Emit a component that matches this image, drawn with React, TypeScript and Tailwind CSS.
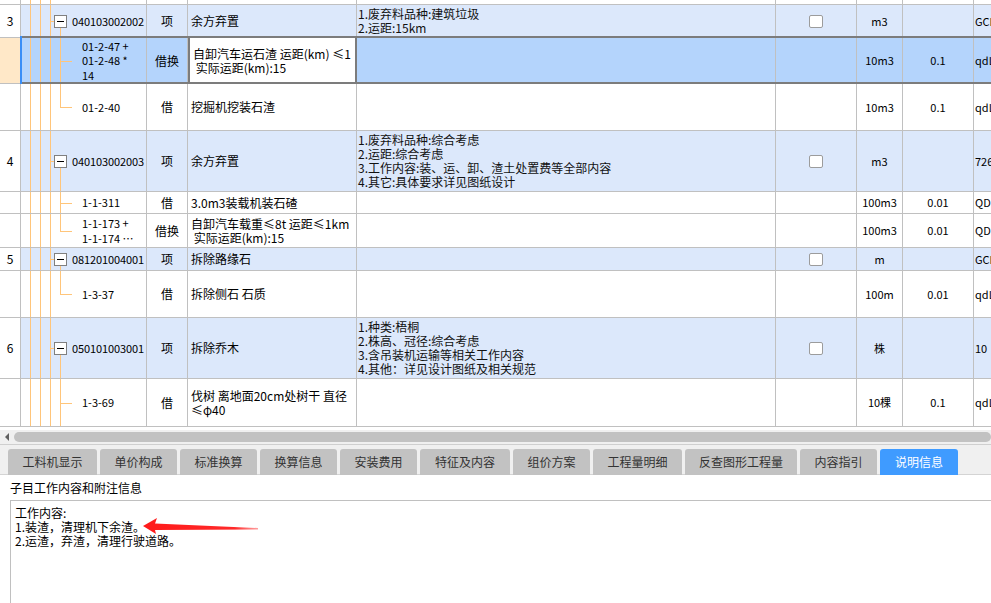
import React from 'react';

type TreeMode = 'none' | 'below' | 'mid' | 'end';

interface Row {
  kind: 'top' | 'parent' | 'child';
  h: string;
  no?: string;
  code?: string[];
  type?: string;
  desc?: string[];
  feat?: string[];
  check?: boolean;
  unit?: string;
  qty?: string;
  last?: string;
  tree?: TreeMode;
  selected?: boolean;
}

const rows: Row[] = [
  { kind: 'top', h: 'h-[5px]' },
  {
    kind: 'parent', h: 'h-[33px]', no: '3', code: ['040103002002'], type: '项', desc: ['余方弃置'],
    feat: ['1.废弃料品种:建筑垃圾', '2.运距:15km'], check: true, unit: 'm3', qty: '', last: 'GCL040', tree: 'below',
  },
  {
    kind: 'child', h: 'h-[46px]', code: ['01-2-47 +', '01-2-48 *', '14'], type: '借换',
    desc: ['自卸汽车运石渣 运距(km) ≤1', ' 实际运距(km):15'], unit: '10m3', qty: '0.1', last: 'qdL01', tree: 'mid', selected: true,
  },
  { kind: 'child', h: 'h-[47px]', code: ['01-2-40'], type: '借', desc: ['挖掘机挖装石渣'], unit: '10m3', qty: '0.1', last: 'qdL01', tree: 'end' },
  {
    kind: 'parent', h: 'h-[61px]', no: '4', code: ['040103002003'], type: '项', desc: ['余方弃置'],
    feat: ['1.废弃料品种:综合考虑', '2.运距:综合考虑', '3.工作内容:装、运、卸、渣土处置费等全部内容', '4.其它:具体要求详见图纸设计'],
    check: true, unit: 'm3', qty: '', last: '726', tree: 'below',
  },
  { kind: 'child', h: 'h-[22px]', code: ['1-1-311'], type: '借', desc: ['3.0m3装载机装石碴'], unit: '100m3', qty: '0.01', last: 'QDL01', tree: 'mid' },
  {
    kind: 'child', h: 'h-[34px]', code: ['1-1-173 +', '1-1-174 ⋯'], type: '借换',
    desc: ['自卸汽车载重≤8t 运距≤1km', ' 实际运距(km):15'], unit: '100m3', qty: '0.01', last: 'QDL01', tree: 'end',
  },
  {
    kind: 'parent', h: 'h-[23px]', no: '5', code: ['081201004001'], type: '项', desc: ['拆除路缘石'],
    feat: [], check: true, unit: 'm', qty: '', last: 'GCL08', tree: 'below',
  },
  { kind: 'child', h: 'h-[47px]', code: ['1-3-37'], type: '借', desc: ['拆除侧石 石质'], unit: '100m', qty: '0.01', last: 'qdL01', tree: 'end' },
  {
    kind: 'parent', h: 'h-[61px]', no: '6', code: ['050101003001'], type: '项', desc: ['拆除乔木'],
    feat: ['1.种类:梧桐', '2.株高、冠径:综合考虑', '3.含吊装机运输等相关工作内容', '4.其他：详见设计图纸及相关规范'],
    check: true, unit: '株', qty: '', last: '10', tree: 'below',
  },
  {
    kind: 'child', h: 'h-[48px]', code: ['1-3-69'], type: '借', desc: ['伐树 离地面20cm处树干 直径', '≤φ40'],
    unit: '10棵', qty: '0.1', last: 'qdL01', tree: 'mid',
  },
];

const tabs = [
  { label: '工料机显示', w: 'w-[89px]' },
  { label: '单价构成', w: 'w-[77px]' },
  { label: '标准换算', w: 'w-[77px]' },
  { label: '换算信息', w: 'w-[77px]' },
  { label: '安装费用', w: 'w-[77px]' },
  { label: '特征及内容', w: 'w-[90px]' },
  { label: '组价方案', w: 'w-[77px]' },
  { label: '工程量明细', w: 'w-[89px]' },
  { label: '反查图形工程量', w: 'w-[112px]' },
  { label: '内容指引', w: 'w-[77px]' },
  { label: '说明信息', w: 'w-[78px]', active: true },
];

const cell = 'border-r border-[#c0c0c0] shrink-0 h-full';

const TreeCell: React.FC<{ row: Row }> = ({ row }) => {
  const bg = row.selected ? 'bg-[#b4d4fc]' : row.kind === 'parent' ? 'bg-[#dce8fb]' : 'bg-white';
  return (
    <div className={`${cell} w-[126px] relative ${bg}`}>
      {/* orange guide lines */}
      <div className="absolute top-0 bottom-0 left-[9px] w-px bg-[#ffc57a]" />
      <div className="absolute top-0 bottom-0 left-[19px] w-px bg-[#ffc57a]" />
      <div className="absolute top-0 bottom-0 left-[29px] w-px bg-[#ffc57a]" />
      {row.kind === 'parent' && (
        <>
          <div className="absolute left-[29px] w-[4px] top-1/2 h-px bg-[#ffc57a]" />
          <div className="absolute left-[39px] w-px top-1/2 bottom-0 bg-[#ffc57a]" />
          <div className="absolute left-[33px] top-1/2 -mt-[6px] w-[13px] h-[13px] border border-[#808080] bg-white flex items-center justify-center">
            <div className="w-[7px] h-px bg-black" />
          </div>
          <div className="absolute left-[51px] top-0 bottom-0 flex items-center text-[11px] leading-[14px] tracking-[-0.1px]">
            {row.code?.[0]}
          </div>
        </>
      )}
      {row.kind === 'child' && (
        <>
          <div
            className={`absolute left-[39px] w-px top-0 bg-[#ffc57a] ${row.tree === 'end' ? 'h-1/2' : 'bottom-0'}`}
          />
          <div className="absolute left-[39px] w-[12px] top-1/2 h-px bg-[#ffc57a]" />
          <div className="absolute left-[61px] top-0 bottom-0 flex flex-col justify-center text-[11px] leading-[14.5px] whitespace-pre">
            {row.code?.map((c, i) => <div key={i}>{c}</div>)}
          </div>
        </>
      )}
    </div>
  );
};

const GridRow: React.FC<{ row: Row }> = ({ row }) => {
  const bg = row.selected ? 'bg-[#b4d4fc]' : row.kind === 'parent' ? 'bg-[#dce8fb]' : 'bg-white';
  return (
    <div className={`relative flex border-b border-[#c0c0c0] ${row.h}`}>
      <div
        className={`${cell} w-[21px] flex items-center justify-center text-[12px] ${row.selected ? 'bg-[#ffe8c8]' : 'bg-white'}`}
      >
        {row.no}
      </div>
      <TreeCell row={row} />
      <div className={`${cell} w-[41px] ${bg} flex items-center justify-center text-[12px]`}>{row.type}</div>
      <div
        className={`shrink-0 h-full w-[169px] flex flex-col justify-center pl-[3px] text-[12px] leading-[14px] whitespace-pre overflow-hidden ${
          row.selected ? 'bg-white border-x-2 border-[#7c7c7c]' : `${bg} border-r border-[#c0c0c0]`
        }`}
      >
        {row.desc?.map((d, i) => <div key={i}>{d}</div>)}
      </div>
      <div className={`${cell} w-[419px] ${bg} flex flex-col justify-center pl-px text-[12px] leading-[14px] text-[#111]`}>
        {row.feat?.map((f, i) => <div key={i}>{f}</div>)}
      </div>
      <div className={`${cell} w-[81px] ${bg} flex items-center justify-center`}>
        {row.check && <div className="w-[14px] h-[13px] rounded-[2px] border border-[#9c9c9c] bg-white" />}
      </div>
      <div className={`${cell} w-[46px] ${bg} flex items-center justify-center text-[11px]`}>{row.unit}</div>
      <div className={`${cell} w-[71px] ${bg} flex items-center justify-center text-[11px]`}>{row.qty}</div>
      <div className={`flex-1 h-full ${bg} flex items-center pl-px text-[11px] overflow-hidden whitespace-nowrap`}>
        {row.last}
      </div>
      {row.selected && (
        <>
          <div className="absolute left-[21px] right-0 -top-[2px] -bottom-px border-y-2 border-[#7c7c7c] pointer-events-none" />
          <div className="absolute left-[20px] w-[2px] -top-[2px] -bottom-px bg-[#3a8ef6]" />
        </>
      )}
    </div>
  );
};

const App: React.FC = () => {
  return (
    <div className="w-[991px] h-[603px] overflow-hidden bg-white relative text-black font-['Noto_Sans_CJK_SC',sans-serif]">
      {/* Grid */}
      <div className="h-[427px] overflow-hidden">
        {rows.map((r, i) => (
          <GridRow key={i} row={r} />
        ))}
      </div>

      {/* Horizontal scrollbar */}
      <div className="mt-[3px] h-[15px] bg-[#f0f0f0] border-b border-[#cfcfcf] flex items-center">
        <div className="w-[14px] flex justify-center">
          <div className="w-0 h-0 border-y-[4px] border-y-transparent border-r-[4px] border-r-[#606060]" />
        </div>
        <div className="flex-1 h-[10px] rounded-[5px] bg-[#c2c2c2]" />
      </div>

      {/* Tabs */}
      <div className="h-[30px] bg-[#f0f0f0] pt-[4px] pl-[8px] flex gap-[3px] border-b border-[#d4d4d4]">
        {tabs.map((t) => (
          <div
            key={t.label}
            className={`${t.w} h-[26px] rounded-t-[3px] flex items-center justify-center text-[12px] ${
              t.active ? 'bg-[#3f9bff] text-white' : 'bg-[#c2c2c2] text-[#333]'
            }`}
          >
            {t.label}
          </div>
        ))}
      </div>

      {/* Bottom panel */}
      <div className="pl-[10px]">
        <div className="h-[25px] pt-[6px] text-[12px] leading-[14px]">子目工作内容和附注信息</div>
        <div className="h-[200px] border-l border-t border-[#c0c0c0] pl-[4px] pt-[5px] text-[12px] leading-[14px]">
          <div>工作内容:</div>
          <div>1.装渣，清理机下余渣。</div>
          <div>2.运渣，弃渣，清理行驶道路。</div>
        </div>
      </div>

      {/* Red annotation arrow */}
      <svg className="absolute left-[140px] top-[514px]" width="124" height="24" viewBox="0 0 124 24">
        <defs>
          <linearGradient id="tail" x1="0" y1="0" x2="1" y2="0">
            <stop offset="0" stopColor="#ff1a1a" />
            <stop offset="0.8" stopColor="#ff2a2a" />
            <stop offset="1" stopColor="#ff6060" stopOpacity="0.6" />
          </linearGradient>
        </defs>
        <polygon
          points="3,12 17,4 15,9.5 118,14 118,15.5 15,16 16,20"
          fill="url(#tail)"
        />
      </svg>
    </div>
  );
};

export default App;
